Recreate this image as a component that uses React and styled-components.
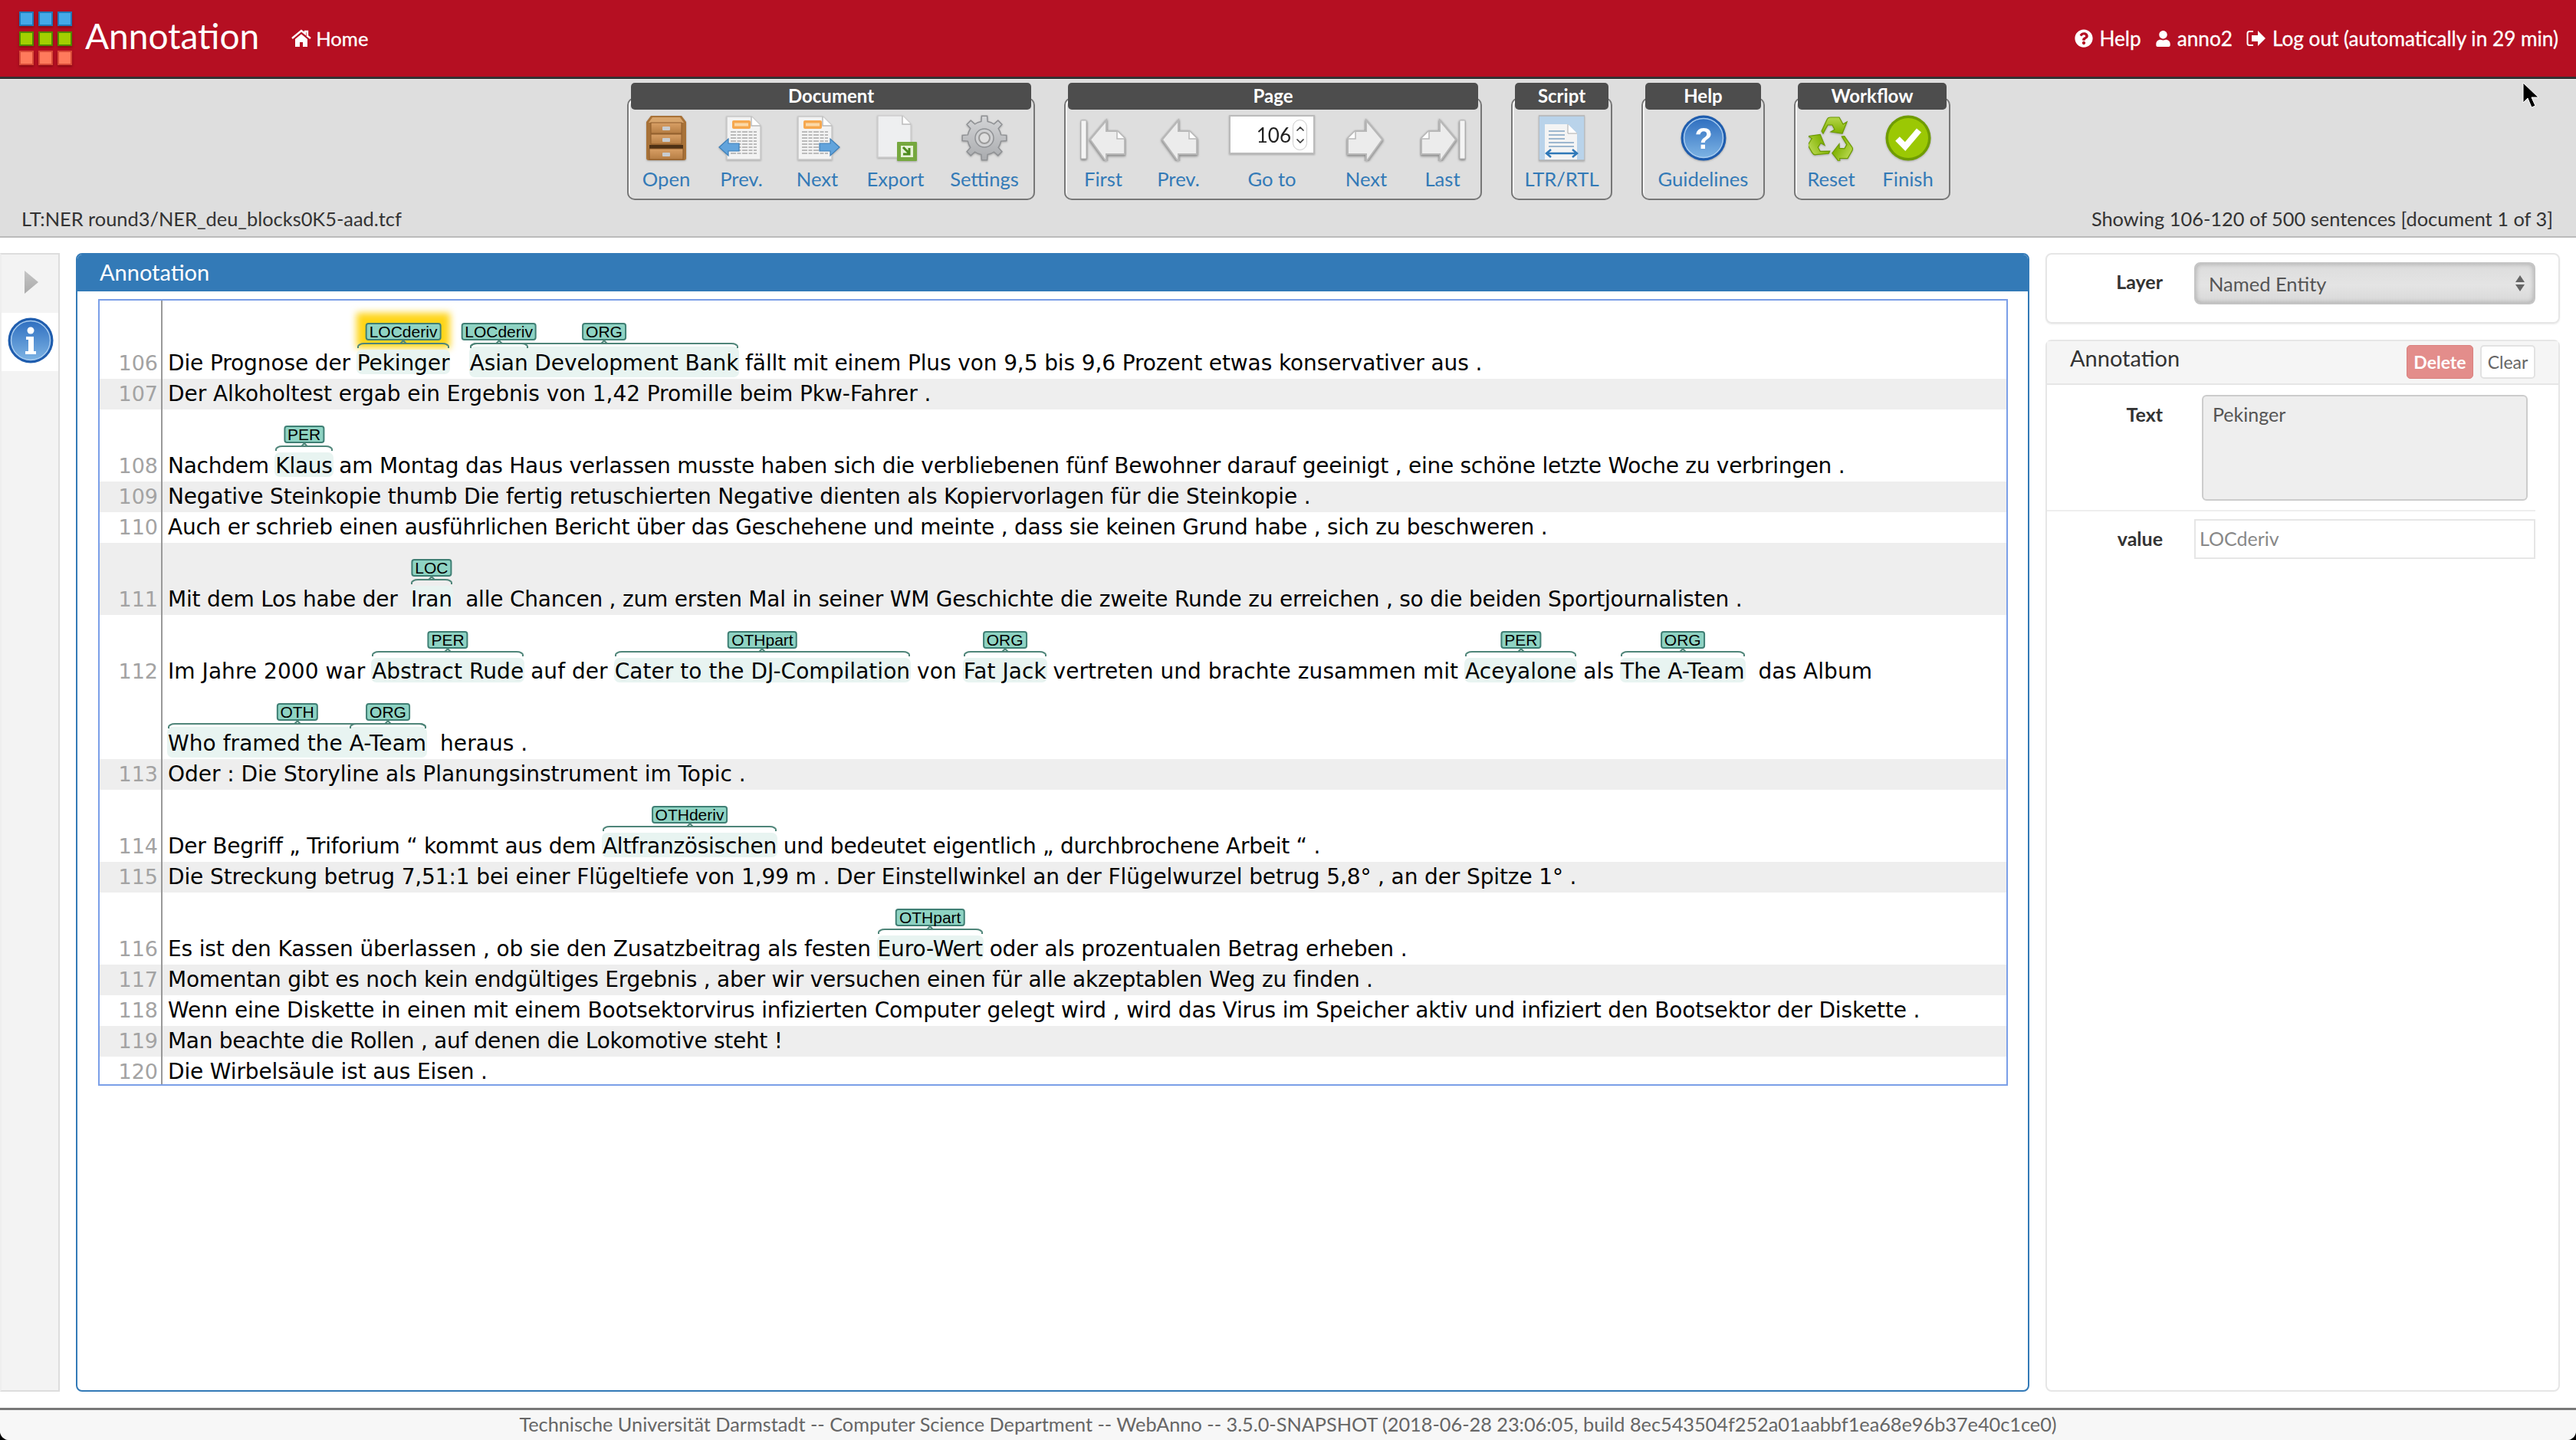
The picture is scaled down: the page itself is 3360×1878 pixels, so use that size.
import React from "react";
import styled, { createGlobalStyle } from "styled-components";
import { ChevronUp, ChevronDown } from "lucide-react";
import { FaQuestionCircle, FaUser } from "react-icons/fa";

const UI_FONT = `Lato, "Open Sans", sans-serif`;
const TEXT_FONT = `"DejaVu Sans", sans-serif`;
const LABEL_FONT = `"Liberation Sans", Arial, sans-serif`;

const GlobalStyle = createGlobalStyle`
  html, body { margin: 0; padding: 0; height: 100%; background: #000; }
  #root { height: 100%; }
  * { box-sizing: border-box; }
`;

const t = (text, label, extra = {}) => ({ text, label, ...extra });
const g = (label, parts) => ({ label, parts });

// fit: per sentence tracking, the reference font has other word widths
const SENTENCES = [
  { n: 106, lane: 62, fit: 0.04, lines: [["Die Prognose der ", t("Pekinger", "LOCderiv", { selected: true }), "   ", g("ORG", [t("Asian", "LOCderiv"), " Development Bank"]), " fällt mit einem Plus von 9,5 bis 9,6 Prozent etwas konservativer aus ."]] },
  { n: 107, fit: 0.09, lines: [["Der Alkoholtest ergab ein Ergebnis von 1,42 Promille beim Pkw-Fahrer ."]] },
  { n: 108, lane: 54, fit: -0.11, lines: [["Nachdem ", t("Klaus", "PER"), " am Montag das Haus verlassen musste haben sich die verbliebenen fünf Bewohner darauf geeinigt , eine schöne letzte Woche zu verbringen ."]] },
  { n: 109, fit: -0.02, lines: [["Negative Steinkopie thumb Die fertig retuschierten Negative dienten als Kopiervorlagen für die Steinkopie ."]] },
  { n: 110, fit: -0.1, lines: [["Auch er schrieb einen ausführlichen Bericht über das Geschehene und meinte , dass sie keinen Grund habe , sich zu beschweren ."]] },
  { n: 111, lane: 54, fit: -0.07, lines: [["Mit dem Los habe der  ", t("Iran", "LOC"), "  alle Chancen , zum ersten Mal in seiner WM Geschichte die zweite Runde zu erreichen , so die beiden Sportjournalisten ."]] },
  {
    n: 112,
    lane: 54,
    fit: 0.2,
    lines: [
      ["Im Jahre 2000 war ", t("Abstract Rude", "PER"), " auf der ", t("Cater to the DJ-Compilation", "OTHpart"), " von ", t("Fat Jack", "ORG"), " vertreten und brachte zusammen mit ", t("Aceyalone", "PER"), " als ", t("The A-Team", "ORG"), "  das Album"],
      [g("OTH", ["Who framed the ", t("A-Team", "ORG")]), "  heraus ."],
    ],
  },
  { n: 113, fit: 0.12, lines: [["Oder : Die Storyline als Planungsinstrument im Topic ."]] },
  { n: 114, lane: 54, fit: -0.1, lines: [["Der Begriff „ Triforium “ kommt aus dem ", t("Altfranzösischen", "OTHderiv"), " und bedeutet eigentlich „ durchbrochene Arbeit “ ."]] },
  { n: 115, fit: 0.03, lines: [["Die Streckung betrug 7,51:1 bei einer Flügeltiefe von 1,99 m . Der Einstellwinkel an der Flügelwurzel betrug 5,8° , an der Spitze 1° ."]] },
  { n: 116, lane: 54, lines: [["Es ist den Kassen überlassen , ob sie den Zusatzbeitrag als festen ", t("Euro-Wert", "OTHpart"), " oder als prozentualen Betrag erheben ."]] },
  { n: 117, fit: -0.08, lines: [["Momentan gibt es noch kein endgültiges Ergebnis , aber wir versuchen einen für alle akzeptablen Weg zu finden ."]] },
  { n: 118, lines: [["Wenn eine Diskette in einen mit einem Bootsektorvirus infizierten Computer gelegt wird , wird das Virus im Speicher aktiv und infiziert den Bootsektor der Diskette ."]] },
  { n: 119, fit: -0.15, lines: [["Man beachte die Rollen , auf denen die Lokomotive steht !"]] },
  { n: 120, last: true, lines: [["Die Wirbelsäule ist aus Eisen ."]] },
];

/* toolbar drawings */
const Sheet = ({ x = 10, w = 44 }) => (
  <>
    <path d={`M${x} 2h${w - 12}l12 12v44h-${w}z`} fill="#f3f3f3" stroke="#c9c9c9" strokeWidth="1.5" />
    <path d={`M${x + w - 12} 2v12h12`} fill="#fff" stroke="#bbb" strokeWidth="1.5" />
  </>
);

const TextLines = ({ x, w }) => (
  <g stroke="#a9a9a9" strokeWidth="1.6" strokeDasharray="7 1.5 5 1.5">
    {[22, 26, 30, 34, 38, 42, 46, 50].map((y) => (
      <line key={y} x1={x} x2={x + w} y1={y} y2={y} />
    ))}
  </g>
);

const DocIcon = ({ dir }) => (
  <svg width="60" height="60" viewBox="0 0 60 60">
    <Sheet x={dir === "left" ? 11 : 5} w={44} />
    <rect x={dir === "left" ? 18 : 12} y="7" width="24" height="11" rx="2" fill="#f6a84f" />
    <rect x={dir === "left" ? 21 : 15} y="10.5" width="18" height="4" fill="#fbd9a8" />
    <TextLines x={dir === "left" ? 16 : 10} w={34} />
    {dir === "left" ? (
      <path d="M1 42L13 31v6h14v10H13v6z" fill="#62a4dc" stroke="#3d7fb8" strokeWidth="1.2" />
    ) : (
      <path d="M59 42L47 31v6H33v10h14v6z" fill="#62a4dc" stroke="#3d7fb8" strokeWidth="1.2" />
    )}
  </svg>
);

const CabinetIcon = () => (
  <svg width="60" height="60" viewBox="0 0 60 60">
    <defs>
      <linearGradient id="wood" x1="0" x2="0" y1="0" y2="1">
        <stop offset="0" stopColor="#d9a066" />
        <stop offset="1" stopColor="#b57d43" />
      </linearGradient>
    </defs>
    <path d="M10 1h40l6 8v47q0 3-3 3H7q-3 0-3-3V9z" fill="#a87238" />
    <path d="M12 3h36l5 7H7z" fill="#d8a56c" />
    <rect x="10" y="10" width="40" height="14" fill="url(#wood)" stroke="#8c5b2a" />
    <rect x="10" y="25" width="40" height="13" fill="url(#wood)" stroke="#8c5b2a" />
    <rect x="8" y="39" width="44" height="5" fill="#4d3115" />
    <rect x="8" y="44" width="44" height="14" fill="url(#wood)" stroke="#8c5b2a" />
    <rect x="25" y="15" width="10" height="5" rx="1" fill="#c8ccd0" />
    <rect x="25" y="30" width="10" height="5" rx="1" fill="#c8ccd0" />
    <rect x="25" y="49" width="10" height="5" rx="1" fill="#c8ccd0" />
  </svg>
);

const ExportIcon = () => (
  <svg width="60" height="60" viewBox="0 0 60 60">
    <path d="M7 1h32l11 11v43H7z" fill="#eeeff0" stroke="#cfcfcf" strokeWidth="1.5" />
    <path d="M39 1v11h11" fill="#fff" stroke="#bbb" strokeWidth="1.5" />
    <rect x="32" y="35" width="26" height="25" rx="1" fill="#76a83f" />
    <rect x="37" y="40" width="16" height="15" fill="#e8f2d8" />
    <path d="M40 42l8 8m0-7v8h-8" fill="none" stroke="#4d8a1d" strokeWidth="3" />
  </svg>
);

const gearPath = () => {
  const cx = 30;
  const cy = 30;
  const outer = 29;
  const inner = 22;
  const teeth = 8;
  let d = "";
  for (let i = 0; i < teeth; i++) {
    const a = (i / teeth) * Math.PI * 2;
    const step = (Math.PI * 2) / teeth;
    const pts = [
      [inner, a - step * 0.5],
      [inner, a - step * 0.24],
      [outer, a - step * 0.16],
      [outer, a + step * 0.16],
      [inner, a + step * 0.24],
    ];
    pts.forEach(([r, ang], j) => {
      const px = (cx + r * Math.cos(ang)).toFixed(1);
      const py = (cy + r * Math.sin(ang)).toFixed(1);
      d += `${i === 0 && j === 0 ? "M" : "L"}${px} ${py}`;
    });
  }
  return d + "z";
};

const GearIcon = () => (
  <svg width="60" height="60" viewBox="0 0 60 60">
    <defs>
      <linearGradient id="gear" x1="0" x2="0" y1="0" y2="1">
        <stop offset="0" stopColor="#d4d5d7" />
        <stop offset="1" stopColor="#a9abae" />
      </linearGradient>
    </defs>
    <path d={gearPath()} fill="url(#gear)" stroke="#8f9194" strokeWidth="1.5" />
    <circle cx="30" cy="30" r="12" fill="#cfd0d2" stroke="#8f9194" strokeWidth="1.5" />
    <circle cx="30" cy="30" r="7" fill="#dedede" stroke="#9a9a9a" strokeWidth="2" />
  </svg>
);

const NavArrow = ({ flip, bar }) => (
  <svg width="60" height="60" viewBox="0 0 60 60" style={flip ? { transform: "scaleX(-1)" } : undefined}>
    <g filter="drop-shadow(0 1px 1.5px #888)">
      {bar && <rect x="1" y="7" width="7" height="50" rx="1" fill="#f4f4f4" stroke="#b5b5b5" />}
      <path d="M12 32L33 7v14h14l10 10v20H33v10z" transform={bar ? "translate(1 0)" : "translate(-3 0)"} fill="#ececec" stroke="#b8b8b8" strokeWidth="2" />
      <path d="M47 21v10h10" transform={bar ? "translate(1 0)" : "translate(-3 0)"} fill="#fff" stroke="#b8b8b8" strokeWidth="1.5" />
    </g>
  </svg>
);

const ScriptIcon = () => (
  <svg width="60" height="60" viewBox="0 0 60 60">
    <rect x="0" y="1" width="60" height="58" fill="#b9d3ea" stroke="#b5b5b5" strokeWidth="1.5" />
    <path d="M8 12h30l12 12v34H8z" fill="#f4f4f4" />
    <path d="M38 12v12h12" fill="#fff" stroke="#aaa" />
    <g stroke="#9db7cf" strokeWidth="2">
      <line x1="13" x2="34" y1="21" y2="21" />
      <line x1="13" x2="34" y1="26" y2="26" />
      <line x1="13" x2="34" y1="31" y2="31" />
      <line x1="13" x2="46" y1="36" y2="36" />
      <line x1="13" x2="46" y1="41" y2="41" />
    </g>
    <path d="M10 50h40M16 45l-6 5 6 5M44 45l6 5-6 5" fill="none" stroke="#2f78b8" strokeWidth="2.5" />
  </svg>
);

const HelpIcon = () => (
  <svg width="60" height="60" viewBox="0 0 60 60">
    <defs>
      <linearGradient id="blueball" x1="0" x2="0" y1="0" y2="1">
        <stop offset="0" stopColor="#2f6fc0" />
        <stop offset="1" stopColor="#7db3e4" />
      </linearGradient>
    </defs>
    <circle cx="30" cy="30" r="29.5" fill="#1f5dae" />
    <circle cx="30" cy="30" r="25.5" fill="url(#blueball)" stroke="#a9cdf0" strokeWidth="1.5" />
    <text x="30" y="44" textAnchor="middle" fontFamily={LABEL_FONT} fontWeight="700" fontSize="38" fill="#fff">?</text>
  </svg>
);

const RecycleIcon = () => (
  <svg width="60" height="60" viewBox="0 0 60 60">
    <defs>
      <linearGradient id="leaf" x1="0" x2="0" y1="0" y2="1">
        <stop offset="0" stopColor="#b5d64a" />
        <stop offset="1" stopColor="#7fb000" />
      </linearGradient>
    </defs>
    {[0, 120, 240].map((rot) => (
      <path
        key={rot}
        transform={`rotate(${rot} 30 33)`}
        d="M17 21L24 6q1-3 5-3h11l5 9 5-3-6 15-15-2 5-3-3-6h-6l-6 11z"
        fill="url(#leaf)"
        stroke="#6c9a00"
        strokeWidth="1.2"
      />
    ))}
  </svg>
);

const CheckIcon = () => (
  <svg width="60" height="60" viewBox="0 0 60 60">
    <circle cx="30" cy="30" r="29.5" fill="#6f9c00" />
    <circle cx="30" cy="30" r="26" fill="#9bc804" />
    <path d="M16 31l10 10 18-21" fill="none" stroke="#fff" strokeWidth="8" />
  </svg>
);

const HomeIcon = () => (
  <svg width="26" height="24" viewBox="0 0 26 24">
    <path d="M1 12L13 2l5 4V3h3v6l4 3" fill="none" stroke="#fff" strokeWidth="2.4" />
    <path d="M5 13l8-6.5 8 6.5v10h-6v-6h-4v6H5z" fill="#fff" />
  </svg>
);

const LogoutIcon = () => (
  <svg width="26" height="22" viewBox="0 0 26 22">
    <path d="M9 2H4Q1.5 2 1.500 4.500v13Q1.500 20 4 20h5" fill="none" stroke="#fff" strokeWidth="2" />
    <path d="M15 1l10 10-10 10v-6H7V7h8z" fill="#fff" />
  </svg>
);

const InfoIcon = () => (
  <svg width="60" height="60" viewBox="0 0 60 60">
    <defs>
      <linearGradient id="infoball" x1="0" x2="0" y1="0" y2="1">
        <stop offset="0" stopColor="#2f6fc0" />
        <stop offset="1" stopColor="#7db3e4" />
      </linearGradient>
    </defs>
    <circle cx="30" cy="30" r="29.500" fill="#1f5dae" />
    <circle cx="30" cy="30" r="25.500" fill="url(#infoball)" stroke="#a9cdf0" strokeWidth="1.5" />
    <circle cx="30" cy="17" r="4.500" fill="#fff" />
    <path d="M24 25h10v19h3v4H23v-4h4V29h-3z" fill="#fff" />
  </svg>
);

const GoToBox = () => (
  <NumberBox>
    106
    <Spinner>
      <ChevronUp size={16} strokeWidth={2.5} />
      <ChevronDown size={16} strokeWidth={2.5} />
    </Spinner>
  </NumberBox>
);

const DOCUMENT_ITEMS = [
  { label: "Open", w: 98, icon: <CabinetIcon /> },
  { label: "Prev.", w: 98, icon: <DocIcon dir="left" /> },
  { label: "Next", w: 100, icon: <DocIcon dir="right" /> },
  { label: "Export", w: 104, icon: <ExportIcon /> },
  { label: "Settings", w: 128, icon: <GearIcon /> },
];

const PAGE_ITEMS = [
  { label: "First", w: 98, icon: <NavArrow bar /> },
  { label: "Prev.", w: 98, icon: <NavArrow /> },
  { label: "Go to", w: 146, icon: <GoToBox /> },
  { label: "Next", w: 100, icon: <NavArrow flip /> },
  { label: "Last", w: 99, icon: <NavArrow flip bar /> },
];

const Token = ({ item, nested }) => {
  const parts = item.parts || [item.text];
  return (
    <TokenWrap>
      {!nested && <Tint $tall={!!item.parts} />}
      {item.selected && <Glow />}
      <Label>{item.label}</Label>
      <Brace><i /></Brace>
      {parts.map((part, i) =>
        typeof part === "string" ? part : <Token key={i} item={part} nested />
      )}
    </TokenWrap>
  );
};

const ToolGroup = ({ title, items }) => (
  <GroupBox>
    <GroupTitle>{title}</GroupTitle>
    <GroupItems>
      {items.map((item) => (
        <ToolItem key={item.label} $w={item.w}>
          <IconSlot>{item.icon}</IconSlot>
          <ToolLabel>{item.label}</ToolLabel>
        </ToolItem>
      ))}
    </GroupItems>
  </GroupBox>
);

const App = () => {
  const tiles = ["blue", "blue", "blue", "green", "green", "green", "red", "red", "red"];

  return (
    <Page>
      <GlobalStyle />
      <Header>
        <Logo>
          {tiles.map((c, i) => (
            <Tile key={i} $color={c} />
          ))}
        </Logo>
        <Brand>Annotation</Brand>
        <HomeLink>
          <HomeIcon /> Home
        </HomeLink>
        <RightNav>
          <NavLink>
            <FaQuestionCircle size={24} /> Help
          </NavLink>
          <NavLink>
            <FaUser size={21} /> anno2
          </NavLink>
          <NavLink>
            <LogoutIcon /> Log out (automatically in 29 min)
          </NavLink>
        </RightNav>
      </Header>

      <Toolbar>
        <Groups>
          <ToolGroup title="Document" items={DOCUMENT_ITEMS} />
          <ToolGroup title="Page" items={PAGE_ITEMS} />
          <ToolGroup title="Script" items={[{ label: "LTR/RTL", w: 128, icon: <ScriptIcon /> }]} />
          <ToolGroup title="Help" items={[{ label: "Guidelines", w: 157, icon: <HelpIcon /> }]} />
          <ToolGroup
            title="Workflow"
            items={[
              { label: "Reset", w: 93, icon: <RecycleIcon /> },
              { label: "Finish", w: 107, icon: <CheckIcon /> },
            ]}
          />
        </Groups>
        <StatusRow>
          <span>LT:NER round3/NER_deu_blocks0K5-aad.tcf</span>
          <span>Showing 106-120 of 500 sentences [document 1 of 3]</span>
        </StatusRow>
      </Toolbar>

      <Main>
        <Sidebar>
          <SideToggle>
            <Triangle />
          </SideToggle>
          <SideTab>
            <InfoIcon />
          </SideTab>
        </Sidebar>

        <CenterPanel>
          <PanelHeading>Annotation</PanelHeading>
          <PanelBody>
            <SentenceBox>
              {SENTENCES.map((s) => (
                <Row key={s.n} $odd={s.n % 2 === 1} $last={s.last}>
                  <RowNumber $lane={s.lane || 0}>{s.n}</RowNumber>
                  <RowText>
                    {s.lines.map((line, i) => (
                      <Line key={i} $lane={s.lane || 0} $fit={s.fit || 0}>
                        {line.map((part, j) =>
                          typeof part === "string" ? part : <Token key={j} item={part} />
                        )}
                      </Line>
                    ))}
                  </RowText>
                </Row>
              ))}
            </SentenceBox>
          </PanelBody>
        </CenterPanel>

        <RightColumn>
          <LayerCard>
            <FieldLabel>Layer</FieldLabel>
            <SelectBox>
              Named Entity
              <SelectArrows>
                <span />
                <span />
              </SelectArrows>
            </SelectBox>
          </LayerCard>
          <DetailCard>
            <DetailHead>
              <DetailTitle>Annotation</DetailTitle>
              <DeleteButton>Delete</DeleteButton>
              <ClearButton>Clear</ClearButton>
            </DetailHead>
            <TextField>
              <FieldLabel>Text</FieldLabel>
              <TextValue readOnly value="Pekinger" />
            </TextField>
            <ValueField>
              <FieldLabel>value</FieldLabel>
              <ValueInput readOnly value="LOCderiv" />
            </ValueField>
          </DetailCard>
        </RightColumn>
      </Main>

      <Footer>
        Technische Universität Darmstadt -- Computer Science Department -- WebAnno -- 3.5.0-SNAPSHOT (2018-06-28 23:06:05, build 8ec543504f252a01aabbf1ea68e96b37e40c1ce0)
      </Footer>
      <Cursor viewBox="0 0 22 34" width="22" height="34">
        <path d="M1 1v26l6-6 5 12 5-2-5-11h9z" fill="#000" stroke="#fff" strokeWidth="1" />
      </Cursor>
    </Page>
  );
};

const Page = styled.div`
  position: relative;
  height: 100%;
  display: flex;
  flex-direction: column;
  background: #fff;
  overflow: hidden;
  border-radius: 0 0 12px 12px;
  font-family: ${UI_FONT};
  color: #333;
`;

const Header = styled.header`
  flex: none;
  height: 103px;
  display: flex;
  align-items: center;
  padding: 0 23px 0 25px;
  background: #b50f22;
  border-bottom: 3px solid #333;
  color: #fff;
`;

const Logo = styled.div`
  display: grid;
  grid-template-columns: repeat(3, 19px);
  grid-auto-rows: 19px;
  column-gap: 6px;
  row-gap: 6.5px;
  filter: blur(0.6px);
`;

const TILE_COLORS = {
  blue: ["#45a9e8", "#1f78b8"],
  green: ["#a3cf00", "#4f8a00"],
  red: ["#ff7a5c", "#d84a38"],
};

const Tile = styled.div`
  background: ${({ $color }) => TILE_COLORS[$color][0]};
  border: 2px solid ${({ $color }) => TILE_COLORS[$color][1]};
  box-shadow: 0 2px 3px rgba(90, 0, 0, 0.5);
`;

const Brand = styled.div`
  margin-left: 17px;
  font-size: 46px;
  line-height: 1;
  margin-bottom: 6px;
`;

const HomeLink = styled.div`
  margin-left: 42px;
  display: flex;
  align-items: center;
  gap: 6px;
  font-size: 25.6px;
  -webkit-text-stroke: 0.3px #fff;
`;

const RightNav = styled.nav`
  margin-left: auto;
  display: flex;
  align-items: center;
  gap: 18px;
  font-size: 26.2px;
  -webkit-text-stroke: 0.3px #fff;
`;

const NavLink = styled.div`
  display: flex;
  align-items: center;
  gap: 8px;
`;

const Toolbar = styled.section`
  flex: none;
  height: 207px;
  padding-top: 4px;
  display: flex;
  flex-direction: column;
  background: #dedede;
  border-top: 1px solid #f0f0f0;
  border-bottom: 2px solid #bbb;
`;

const Groups = styled.div`
  display: flex;
  justify-content: center;
  gap: 38px;
  padding-left: 2px;
`;

const GroupBox = styled.div`
  margin-top: 19px;
  height: 134px;
  padding: 0 0;
  border: 2px solid #777;
  border-radius: 10px;
  box-shadow: inset 1.5px 1.5px 0 #fff;
`;

const GroupTitle = styled.div`
  margin: -21px 3px 0;
  height: 35px;
  line-height: 34px;
  border-radius: 5px;
  background: #4d4d4d;
  color: #fff;
  text-align: center;
  font-size: 24px;
  font-weight: 700;
`;

const GroupItems = styled.div`
  display: flex;
  padding-top: 7px;
`;

const ToolItem = styled.div`
  width: ${({ $w }) => $w}px;
  display: flex;
  flex-direction: column;
  align-items: center;
`;

const IconSlot = styled.div`
  height: 60px;
  display: flex;
  align-items: flex-start;
  justify-content: center;
  filter: drop-shadow(0 1px 1px rgba(0, 0, 0, 0.25));
`;

const ToolLabel = styled.div`
  margin-top: 8px;
  line-height: 30px;
  font-size: 25.6px;
  color: #337ab7;
  white-space: nowrap;
`;

const NumberBox = styled.div`
  width: 112px;
  height: 51px;
  display: flex;
  align-items: center;
  justify-content: flex-end;
  gap: 2px;
  padding-right: 8px;
  background: #fff;
  border: 2px solid #bbb;
  font-size: 26px;
  color: #222;
`;

const Spinner = styled.div`
  width: 19px;
  height: 40px;
  display: flex;
  flex-direction: column;
  align-items: center;
  justify-content: center;
  border: 1px solid #ccc;
  border-radius: 10px;
  color: #333;
`;

const StatusRow = styled.div`
  margin-top: auto;
  height: 40px;
  padding: 0 30px 6px 28px;
  display: flex;
  align-items: center;
  justify-content: space-between;
  font-size: 25.4px;
  color: #333;
`;

const Main = styled.main`
  flex: 1;
  min-height: 0;
  display: flex;
  gap: 21px;
  padding: 20px 21px 21px 0;
`;

const Sidebar = styled.aside`
  flex: none;
  width: 78px;
  background: #f3f3f3;
  border: 2px solid #ddd;
  border-left-color: #eee;
`;

const SideToggle = styled.div`
  height: 76px;
  padding: 21px 0 0 30px;
`;

const Triangle = styled.div`
  width: 18px;
  height: 30px;
  background: linear-gradient(#c5c5c5, #aaa);
  clip-path: polygon(0 0, 100% 50%, 0 100%);
`;

const SideTab = styled.div`
  height: 76px;
  padding: 6px 0 0 8px;
  background: #fff;
`;

const CenterPanel = styled.div`
  flex: 1;
  min-width: 0;
  display: flex;
  flex-direction: column;
  border: 2px solid #337ab7;
  border-radius: 8px;
  overflow: hidden;
`;

const PanelHeading = styled.div`
  flex: none;
  height: 48px;
  line-height: 46px;
  padding-left: 29px;
  background: #337ab7;
  color: #fff;
  font-size: 29px;
`;

const PanelBody = styled.div`
  flex: 1;
  padding: 10px 26px 0 27px;
`;

const SentenceBox = styled.div`
  border: 2px solid #7b9fe8;
  overflow: hidden;
`;

const Row = styled.div`
  display: flex;
  background: ${({ $odd }) => ($odd ? "#eeeeee" : "#fff")};
  ${({ $last }) => $last && "height: 36px;"}
`;

const RowNumber = styled.div`
  flex: none;
  width: 82px;
  padding-top: ${({ $lane }) => $lane}px;
  padding-right: 4px;
  border-right: 2px solid #999;
  text-align: right;
  line-height: 40px;
  font-family: ${TEXT_FONT};
  font-size: 27px;
  color: #a3a3a3;
`;

const RowText = styled.div`
  flex: 1;
  min-width: 0;
  padding-left: 7px;
`;

const Line = styled.div`
  isolation: isolate;
  padding-top: ${({ $lane }) => $lane}px;
  line-height: 40px;
  white-space: pre;
  font-family: ${TEXT_FONT};
  font-size: 28px;
  letter-spacing: ${({ $fit }) => -0.15 + $fit}px;
  color: #000;
`;

const TokenWrap = styled.span`
  position: relative;
  display: inline-block;
`;

const Tint = styled.span`
  position: absolute;
  z-index: -1;
  left: -1px;
  right: -1px;
  top: ${({ $tall }) => ($tall ? "-2px" : "2px")};
  height: ${({ $tall }) => ($tall ? "40px" : "32px")};
  border-radius: 7px;
  background: #e8f4f1;
`;

const Glow = styled.span`
  position: absolute;
  z-index: -2;
  left: -1px;
  right: -1px;
  top: -46px;
  height: 46px;
  background: #ffd518;
  filter: blur(5px);
`;

const Label = styled.span`
  position: absolute;
  left: 50%;
  top: -33px;
  transform: translateX(-50%);
  height: 23px;
  padding: 0 3px;
  line-height: 20px;
  font-family: ${LABEL_FONT};
  font-size: 21px;
  letter-spacing: 0;
  white-space: nowrap;
  color: #000;
  background: #8fd3c3;
  border: 2px solid #3f7f74;
  border-radius: 4px;
`;

const Brace = styled.span`
  position: absolute;
  left: 0;
  right: 0;
  top: -7px;
  height: 7px;
  &::before,
  &::after {
    content: "";
    position: absolute;
    top: 0;
    width: 50%;
    height: 5px;
    border-top: 2px solid #4f8579;
  }
  &::before {
    left: 0;
    border-left: 2px solid #4f8579;
    border-top-left-radius: 9px 5px;
  }
  &::after {
    right: 0;
    border-right: 2px solid #4f8579;
    border-top-right-radius: 9px 5px;
  }
  i {
    position: absolute;
    left: 50%;
    top: -3px;
    width: 6px;
    height: 6px;
    margin-left: -3px;
    transform: rotate(45deg);
    border-left: 2px solid #4f8579;
    border-top: 2px solid #4f8579;
  }
`;

const RightColumn = styled.div`
  flex: none;
  width: 671px;
  display: flex;
  flex-direction: column;
  gap: 21px;
`;

const LayerCard = styled.div`
  flex: none;
  height: 92px;
  display: flex;
  padding-top: 10px;
  border: 2px solid #e6e6e6;
  border-radius: 8px;
  box-shadow: 0 1px 2px rgba(0, 0, 0, 0.08);
`;

const FieldLabel = styled.div`
  flex: none;
  width: 151px;
  margin-right: 41px;
  text-align: right;
  font-size: 25px;
  font-weight: 700;
  color: #333;
  line-height: 50px;
`;

const SelectBox = styled.div`
  width: 445px;
  height: 55px;
  display: flex;
  align-items: center;
  justify-content: space-between;
  padding: 0 12px 0 17px;
  background: linear-gradient(#dcdcdc, #e4e4e4 55%, #d8d8d8);
  border: 2px solid #c4c4c4;
  border-radius: 8px;
  box-shadow: inset 0 0 6px rgba(0, 0, 0, 0.25);
  font-size: 25.5px;
  color: #555;
`;

const SelectArrows = styled.div`
  display: flex;
  flex-direction: column;
  gap: 3px;
  span {
    width: 12px;
    height: 9px;
    background: #666;
    clip-path: polygon(50% 0, 100% 100%, 0 100%);
  }
  span:last-child {
    clip-path: polygon(0 0, 100% 0, 50% 100%);
  }
`;

const DetailCard = styled.div`
  flex: 1;
  border: 2px solid #e6e6e6;
  border-radius: 8px;
`;

const DetailHead = styled.div`
  height: 57px;
  display: flex;
  align-items: flex-start;
  padding: 5px 30px 0 30px;
  background: #f5f5f5;
  border-bottom: 2px solid #e6e6e6;
`;

const DetailTitle = styled.div`
  margin-right: auto;
  font-size: 29px;
  line-height: 34px;
  color: #333;
`;

const DeleteButton = styled.div`
  width: 87px;
  height: 44px;
  line-height: 42px;
  text-align: center;
  margin-right: 9px;
  background: #e38d8b;
  border: 1px solid #d9807e;
  border-radius: 5px;
  color: #fff;
  font-size: 23px;
  font-weight: 700;
`;

const ClearButton = styled.div`
  width: 72px;
  height: 44px;
  line-height: 40px;
  text-align: center;
  background: #fff;
  border: 2px solid #e2e2e2;
  border-radius: 5px;
  color: #666;
  font-size: 23px;
`;

const TextField = styled.div`
  display: flex;
  margin: 13px 30px 0 0;
  padding-bottom: 12px;
  border-bottom: 2px solid #eee;
`;

const TextValue = styled.textarea`
  display: block;
  width: 425px;
  height: 138px;
  margin-left: 10px;
  padding: 5px 12px;
  resize: none;
  outline: none;
  background: #eee;
  border: 2px solid #ccc;
  border-radius: 6px;
  font-family: ${UI_FONT};
  font-size: 25px;
  line-height: 36px;
  color: #555;
`;

const ValueField = styled.div`
  display: flex;
  margin: 10px 30px 0 0;
`;

const ValueInput = styled.input`
  width: 445px;
  height: 52px;
  padding: 0 5px 3px;
  outline: none;
  background: #fff;
  border: 2px solid #e6e6e6;
  font-family: ${UI_FONT};
  font-size: 25px;
  color: #888;
`;

const Footer = styled.footer`
  flex: none;
  height: 42px;
  line-height: 36px;
  text-align: center;
  background: #f7f7f7;
  border-top: 3px solid #777;
  font-size: 25.27px;
  color: #666;
`;

const Cursor = styled.svg`
  position: absolute;
  left: 3290px;
  top: 107px;
`;

export default App;
